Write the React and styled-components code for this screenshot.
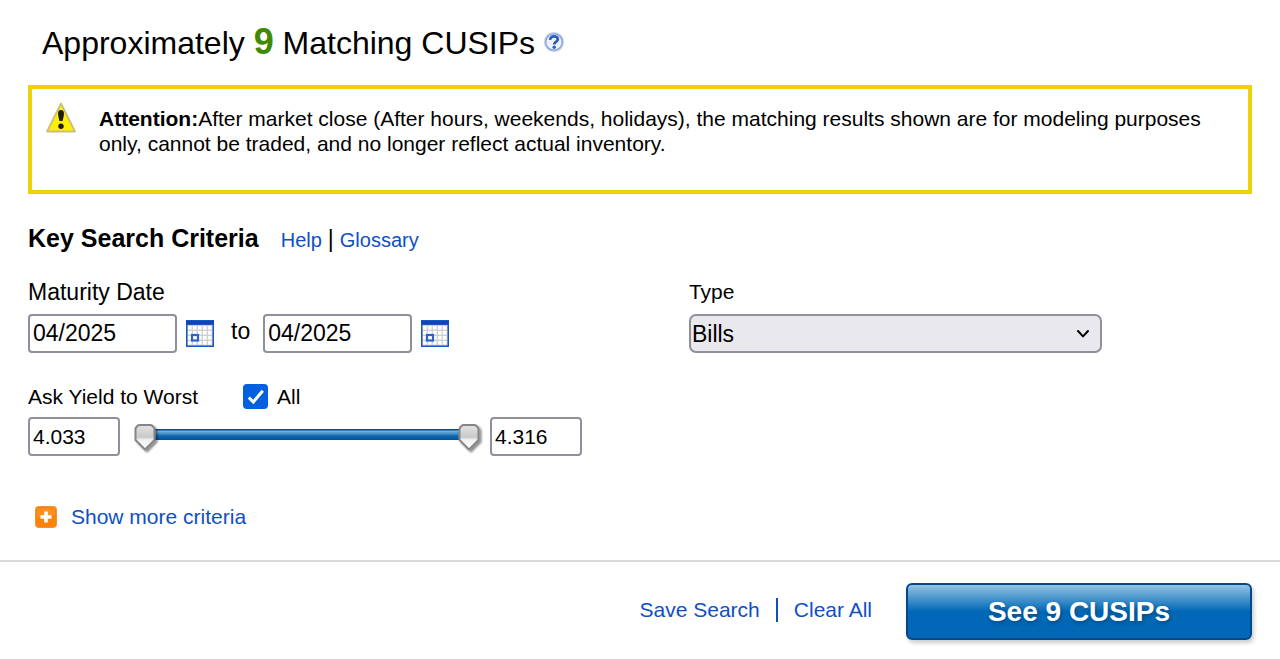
import React, { useState } from 'react'
import styled, { createGlobalStyle } from 'styled-components'

const thumbSvg = encodeURIComponent(`<svg xmlns="http://www.w3.org/2000/svg" width="28" height="34" viewBox="0 0 28 34">
<defs>
<linearGradient id="g" x1="0" y1="0" x2="0" y2="1"><stop offset="0" stop-color="#e2e2e2"/><stop offset=".5" stop-color="#c9c9c9"/><stop offset=".6" stop-color="#f0f0f0"/><stop offset="1" stop-color="#fff"/></linearGradient>
<filter id="s" x="-30%" y="-30%" width="170%" height="170%"><feDropShadow dx="2" dy="2" stdDeviation="1.3" flood-opacity=".45"/></filter>
</defs>
<path filter="url(#s)" d="M5.5 5H16.5Q18.500 5 20.500 8.500V20L11 29.500L1.500 20V8.500Q3.500 5 5.500 5Z" fill="url(#g)" stroke="#858585" stroke-width="2" stroke-linejoin="round"/>
</svg>`)

const chevronSvg = encodeURIComponent(`<svg xmlns="http://www.w3.org/2000/svg" width="14" height="10" viewBox="0 0 14 10"><path d="M2 2L7 7.400L12 2" fill="none" stroke="#000" stroke-width="2" stroke-linecap="round"/></svg>`)

const checkSvg = encodeURIComponent(`<svg xmlns="http://www.w3.org/2000/svg" width="25" height="25" viewBox="0 0 25 25"><path d="M5.800 13.500L10.300 18L19.800 6.800" fill="none" stroke="#fff" stroke-width="3"/></svg>`)

const HelpIcon = () => (
  <svg width="22" height="22" viewBox="0 0 22 22" aria-hidden="true">
    <circle cx="11" cy="11" r="9.300" fill="#eef3fc" stroke="#c3cfea" strokeWidth="1.600" />
    <circle cx="11" cy="11" r="8.200" fill="none" stroke="#7f9dda" strokeWidth="1.200" />
    <path d="M7.200 8.900C7 4.200 15 4.200 14.800 8.500C14.600 11 11.200 10.700 11.200 13.400" fill="none" stroke="#2b5cc4" strokeWidth="2.800" />
    <circle cx="11.200" cy="16.300" r="1.700" fill="#2b5cc4" />
  </svg>
)

const WarningIcon = () => (
  <svg width="30" height="31" viewBox="0 0 30 31" aria-hidden="true">
    <path d="M15 1.500L29 29.500H1Z" fill="#fdf000" stroke="#c9c07c" strokeWidth="1.800" strokeLinejoin="round" />
    <path d="M15 8C18.800 8 18.400 12 16.600 19H13.400C11.600 12 11.200 8 15 8Z" fill="#1c1c08" />
    <circle cx="15" cy="24.300" r="2.700" fill="#1c1c08" />
  </svg>
)

const CalendarIcon = () => (
  <svg width="28" height="27" viewBox="0 0 28 27" aria-hidden="true">
    <rect width="28" height="27" fill="#1a55c6" />
    <rect x="0" y="1" width="28" height="3" fill="#0f45b4" />
    <rect x="1.500" y="5" width="25" height="20.500" fill="#d0d0d0" />
    {[5.5, 10.5, 15.5, 20.5].map(y => (
      [2, 7, 12, 17, 22].map(x => (
        <rect key={`${x}-${y}`} x={x} y={y + 0.5} width="3.600" height="3.600" fill="#fff" />
      ))
    ))}
    <rect x="6" y="15" width="6" height="5.500" fill="#fff" stroke="#2b62cf" strokeWidth="2.200" />
  </svg>
)

const PlusIcon = () => (
  <svg width="22" height="22" viewBox="0 0 22 22" aria-hidden="true">
    <rect x="0.500" y="0.500" width="21" height="21" rx="3" fill="#fd8208" stroke="#f0923a" />
    <path d="M2 2.500H20V9C14 9 8 11 2 12Z" fill="#ff9a35" opacity="0.600" />
    <path d="M11 5.500V16.500M5.500 11H16.500" stroke="#fff" strokeWidth="3.600" />
  </svg>
)

const App = () => {
  const [from, setFrom] = useState('04/2025')
  const [to, setTo] = useState('04/2025')
  const [low, setLow] = useState('4.033')
  const [high, setHigh] = useState('4.316')
  const [all, setAll] = useState(true)

  return (
    <>
      <GlobalStyle />
      <Main>
        <Title>
          <span>Approximately <Count>9</Count> Matching CUSIPs</span>
          <HelpButton type="button" aria-label="Help">
            <HelpIcon />
          </HelpButton>
        </Title>

        <Alert role="alert">
          <WarningIcon />
          <AlertText>
            <b>Attention:</b>After market close (After hours, weekends, holidays), the matching results shown are for modeling purposes only, cannot be traded, and no longer reflect actual inventory.
          </AlertText>
        </Alert>

        <SectionHead>
          <SectionTitle>Key Search Criteria</SectionTitle>
          <HelpLinks>
            <Link href="#help">Help</Link>
            <Pipe>|</Pipe>
            <Link href="#glossary">Glossary</Link>
          </HelpLinks>
        </SectionHead>

        <Criteria>
          <div>
            <Label $large htmlFor="from">Maturity Date</Label>
            <DateRow>
              <TextInput $large id="from" value={from} onChange={e => setFrom(e.target.value)} />
              <IconButton type="button" aria-label="Pick start date">
                <CalendarIcon />
              </IconButton>
              <To htmlFor="to">to</To>
              <TextInput $large id="to" value={to} onChange={e => setTo(e.target.value)} />
              <IconButton type="button" aria-label="Pick end date">
                <CalendarIcon />
              </IconButton>
            </DateRow>
          </div>

          <div>
            <Label htmlFor="type">Type</Label>
            <Select id="type" defaultValue="Bills">
              <option>Bills</option>
            </Select>
          </div>

          <div>
            <YieldHead>
              <span id="yield">Ask Yield to Worst</span>
              <CheckLabel>
                <Checkbox type="checkbox" checked={all} onChange={e => setAll(e.target.checked)} />
                All
              </CheckLabel>
            </YieldHead>
            <YieldRow role="group" aria-labelledby="yield">
              <TextInput aria-label="Minimum yield" value={low} onChange={e => setLow(e.target.value)} />
              <Slider>
                <Range type="range" aria-label="Minimum" min="4.033" max="4.316" step="0.001" value={low} onChange={e => setLow(e.target.value)} />
                <Range type="range" aria-label="Maximum" min="4.033" max="4.316" step="0.001" value={high} onChange={e => setHigh(e.target.value)} />
              </Slider>
              <TextInput aria-label="Maximum yield" value={high} onChange={e => setHigh(e.target.value)} />
            </YieldRow>
          </div>
        </Criteria>

        <More href="#more">
          <PlusIcon />
          Show more criteria
        </More>
      </Main>

      <Footer>
        <FooterLinks>
          <Link href="#save">Save Search</Link>
          <Divider />
          <Link href="#clear">Clear All</Link>
        </FooterLinks>
        <Submit type="submit">See 9 CUSIPs</Submit>
      </Footer>
    </>
  )
}

export default App

const GlobalStyle = createGlobalStyle`
*{
    box-sizing: border-box;
}
body{
    margin: 0;
    background-color: #fff;
    color: #000;
    font-family: "Liberation Sans", Arial, sans-serif;
    font-size: 21px;
}
input, select, button{
    font-family: inherit;
    color: inherit;
}
svg{
    display: block;
    flex-shrink: 0;
}
`

const Main = styled.main`
    padding: 24px 28px 30px;
`

const Title = styled.h1`
    display: flex;
    align-items: center;
    gap: 8px;
    margin: 0 0 23px;
    padding-left: 14px;
    font-size: 32px;
    font-weight: 400;
    line-height: 38px;
`

const Count = styled.b`
    color: #3f8a00;
    font-size: 36px;
    line-height: 1;
`

const IconButton = styled.button`
    padding: 0;
    border: 0;
    background: none;
    cursor: pointer;
`

const HelpButton = styled(IconButton)`
    margin-bottom: 3px;
`

const Alert = styled.div`
    display: flex;
    gap: 23px;
    padding: 13px 30px 34px 14px;
    border: 4px solid #f0cf0c;
`

const AlertText = styled.p`
    margin: 4px 0 0;
    line-height: 25px;
`

const SectionHead = styled.div`
    display: flex;
    align-items: baseline;
    gap: 22px;
    margin: 29px 0 24px;
    line-height: 30px;
`

const SectionTitle = styled.h2`
    margin: 0;
    font-size: 25px;
`

const HelpLinks = styled.div`
    display: flex;
    align-items: baseline;
    gap: 6px;
    font-size: 20px;
`

const Pipe = styled.span`
    font-size: 23px;
    line-height: 1;
`

const Link = styled.a`
    color: #0f4fc4;
    text-decoration: none;
`

const Criteria = styled.form`
    display: grid;
    grid-template-columns: 54% 46%;
    row-gap: 31px;
`

const Label = styled.label`
    display: block;
    margin-bottom: 9px;
    font-size: ${({ $large }) => ($large ? '23px' : '21px')};
    line-height: 26px;
`

const DateRow = styled.div`
    display: flex;
    align-items: center;
    gap: 9px;
`

const To = styled.label`
    margin: 0 4px 4px 8px;
    font-size: 23px;
`

const TextInput = styled.input`
    width: ${({ $large }) => ($large ? '149px' : '92px')};
    height: 39px;
    padding: 0 3px;
    border: 2px solid #8f8f9d;
    border-radius: 4px;
    background-color: #fff;
    font-size: ${({ $large }) => ($large ? '23px' : '21px')};
`

const Select = styled.select`
    appearance: none;
    display: block;
    width: 413px;
    max-width: 100%;
    height: 39px;
    padding: 0 30px 0 1px;
    border: 2px solid #8f8f9d;
    border-radius: 7px;
    background: #e9e9ed url("data:image/svg+xml,${chevronSvg}") no-repeat right 10px center;
    font-size: 23px;
`

const YieldHead = styled.div`
    display: flex;
    align-items: center;
    gap: 45px;
    margin-bottom: 8px;
    line-height: 25px;
`

const CheckLabel = styled.label`
    display: flex;
    align-items: center;
    gap: 9px;
`

const Checkbox = styled.input`
    appearance: none;
    width: 25px;
    height: 25px;
    margin: 0;
    border: 2px solid #8f8f9d;
    border-radius: 4px;
    &:checked{
        border: 0;
        background: #0560e0 url("data:image/svg+xml,${checkSvg}") center no-repeat;
    }
`

const YieldRow = styled.div`
    display: flex;
    align-items: center;
    gap: 8px;
`

const Slider = styled.div`
    position: relative;
    width: 354px;
    height: 34px;
    padding: 9px 18px;
    background: linear-gradient(#0a4a86 0 1px, #7db4dc 2px, #3f8ac6 5px, #0b66b2 7px, #0a5ea8 9px, #07508f 11px) content-box no-repeat;
    background-size: 100% 11px;
`

/* both handles share one track, so only the thumbs take the pointer */
const Range = styled.input`
    appearance: none;
    position: absolute;
    inset: 0;
    width: calc(100% - 2px);
    height: 34px;
    margin: 0 6px;
    background: none;
    pointer-events: none;
    &::-webkit-slider-thumb{
        appearance: none;
        width: 28px;
        height: 34px;
        border: 0;
        background: url("data:image/svg+xml,${thumbSvg}") no-repeat;
        pointer-events: auto;
    }
`

const More = styled.a`
    display: flex;
    align-items: center;
    gap: 14px;
    width: fit-content;
    margin-top: 48px;
    padding-left: 7px;
    color: #0f4fc4;
    line-height: 26px;
    text-decoration: none;
`

const Footer = styled.footer`
    display: flex;
    justify-content: flex-end;
    align-items: center;
    gap: 34px;
    padding: 21px 28px 19px;
    border-top: 2px solid #d9d9d9;
`

const FooterLinks = styled.div`
    display: flex;
    align-items: center;
    gap: 16px;
    line-height: 24px;
    margin-bottom: 3px;
`

const Divider = styled.span`
    width: 2px;
    height: 24px;
    background-color: #0f4fc4;
`

const Submit = styled.button`
    width: 346px;
    height: 57px;
    border: 2px solid #03498a;
    border-radius: 6px;
    background: linear-gradient(#94c3e4, #0068b7 50%);
    box-shadow: 2px 3px 4px rgba(0, 0, 0, 0.2);
    && {
        color: #fff;
    }
    font-size: 28px;
    font-weight: 700;
    text-shadow: 1px 2px 4px rgba(0, 0, 0, 0.3);
    cursor: pointer;
`
